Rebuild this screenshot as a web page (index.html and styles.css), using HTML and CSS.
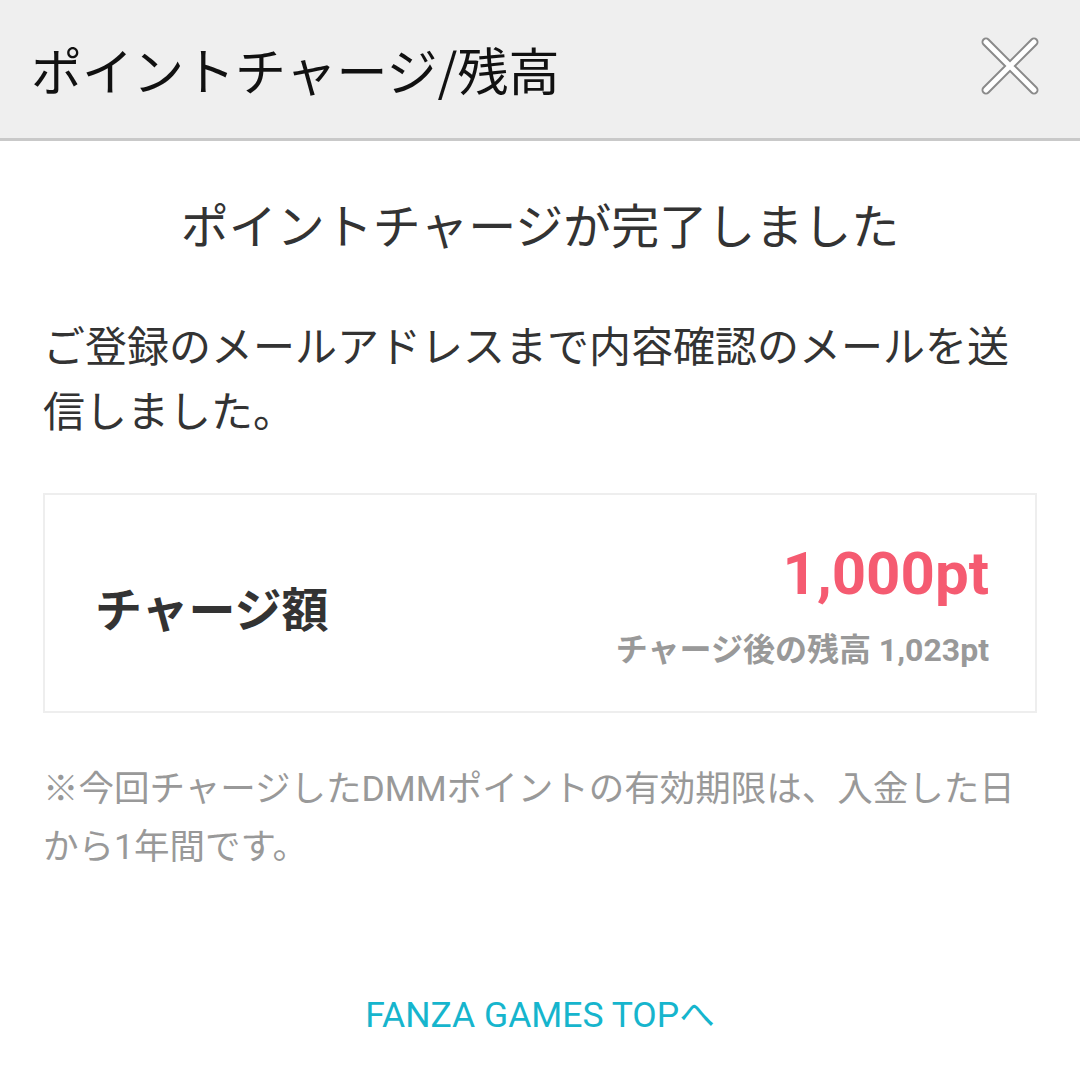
FILE: index.html
```html
<!DOCTYPE html>
<html lang="ja">
<head>
  <meta charset="UTF-8" />
  <meta name="viewport" content="width=device-width, initial-scale=1.0" />
  <title>ポイントチャージ/残高</title>
  <link rel="stylesheet" href="styles.css">
</head>
<body>

  <header class="topbar">
    <h1>ポイントチャージ/残高</h1>
    <button class="close" aria-label="閉じる">
      <svg width="64" height="64" viewBox="0 0 64 64">
        <path d="M8 8 L56 56 M56 8 L8 56" stroke="#8a8a8a" stroke-width="9" stroke-linecap="round" fill="none"/>
        <path d="M8 8 L56 56 M56 8 L8 56" stroke="#ffffff" stroke-width="5" stroke-linecap="round" fill="none"/>
      </svg>
    </button>
  </header>

  <main class="content">
    <h2 class="done">ポイントチャージが完了しました</h2>
    <p class="lead">ご登録のメールアドレスまで内容確認のメールを送信しました。</p>

    <section class="charge-box">
      <div class="label">チャージ額</div>
      <div class="amounts">
        <div class="amount">1,000pt</div>
        <div class="balance">チャージ後の残高 1,023pt</div>
      </div>
    </section>

    <p class="note">※今回チャージしたDMMポイントの有効期限は、入金した日から1年間です。</p>

    <div class="back">
      <a href="#">FANZA GAMES TOPへ</a>
    </div>
  </main>

</body>
</html>
```

FILE: styles.css
```css
* {
  margin: 0;
  padding: 0;
  box-sizing: border-box;
}
body {
  font-family: Roboto, "Noto Sans CJK JP", sans-serif;
  background-color: #fff;
  color: #333;
}
.topbar {
  display: flex;
  align-items: center;
  justify-content: space-between;
  height: 141px;
  background-color: #efefef;
  border-bottom: 3px solid #c9c9c9;
  padding: 0 38px 0 31px;
}
.topbar h1 {
  font-family: "Noto Sans CJK JP", sans-serif;
  font-weight: 400;
  font-size: 51px;
  color: #111;
}
.close {
  background: none;
  border: none;
  width: 64px;
  height: 64px;
  margin-top: -6px;
}
.content {
  padding: 0 43px;
}
.done {
  font-family: "Noto Sans CJK JP", sans-serif;
  font-weight: 400;
  font-size: 48px;
  text-align: center;
  margin-top: 48px;
  line-height: 68px;
  color: #333;
}
.lead {
  font-family: "Noto Sans CJK JP", sans-serif;
  font-size: 42px;
  line-height: 65px;
  margin-top: 54px;
  color: #333;
}
.charge-box {
  display: flex;
  align-items: center;
  justify-content: space-between;
  border: 2px solid #eee;
  height: 220px;
  margin-top: 52px;
  padding: 0 46px 0 50px;
}
.charge-box .label {
  font-family: "Noto Sans CJK JP", sans-serif;
  font-weight: 700;
  font-size: 47px;
  color: #333;
  margin-top: 6px;
}
.amounts {
  text-align: right;
  margin-top: 8px;
}
.amount {
  font-weight: 700;
  font-size: 60px;
  line-height: 64px;
  color: #f55b71;
}
.balance {
  font-weight: 700;
  font-size: 32px;
  line-height: 44px;
  margin-top: 22px;
  color: #999;
}
.note {
  font-size: 35.5px;
  line-height: 58px;
  margin-top: 47px;
  color: #999;
}
.back {
  text-align: center;
  margin-top: 110px;
}
.back a {
  font-size: 35.5px;
  color: #16b5cd;
  text-decoration: none;
}
```
